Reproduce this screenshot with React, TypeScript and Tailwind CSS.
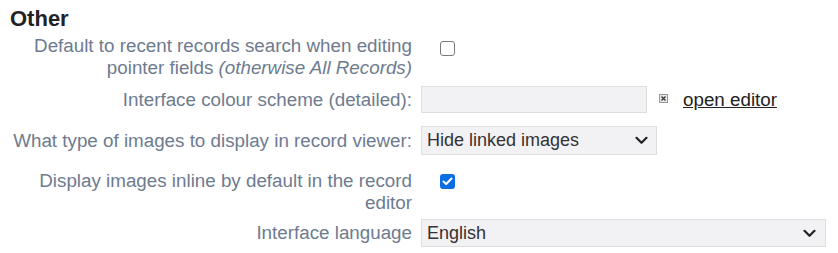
import React from "react";

const Chevron = () => (
  <svg width="13" height="9" viewBox="0 0 13 9" className="block">
    <path d="M1.5 1.8 L6.5 6.8 L11.5 1.8" fill="none" stroke="#222" strokeWidth="2.2" strokeLinecap="round" strokeLinejoin="round" />
  </svg>
);

const Label = ({ children }: { children: React.ReactNode }) => (
  <div className="w-[402px] shrink-0 text-right text-[18.8px] leading-[22px] text-[#6e7b8f]">{children}</div>
);

export default function App() {
  return (
    <div className="w-[838px] h-[253px] bg-white pl-[10px] overflow-hidden" style={{ fontFamily: '"Liberation Sans", Arial, sans-serif' }}>
      <h2 className="pt-[6px] text-[22px] leading-[26px] font-bold text-[#222]">Other</h2>

      <div className="mt-[3px] flex items-start">
        <Label>
          Default to recent records search when editing pointer fields <i>(otherwise All Records)</i>
        </Label>
        <div className="ml-[28px] mt-[6px] w-[15px] h-[15px] rounded-[3px] border border-[#7a7a7a] bg-white" />
      </div>

      <div className="mt-[7px] flex items-center">
        <Label>Interface colour scheme (detailed):</Label>
        <div className="ml-[9px] w-[226px] h-[27px] bg-[#f2f1f4] border border-[#dedde0]" />
        <span className="ml-[12px] mb-[3px] w-[9px] h-[9px] border border-[#999] bg-[#e8e8e8] flex items-center justify-center">
          <svg width="7" height="7" viewBox="0 0 7 7"><path d="M1.5 1.5 L5.5 5.5 M5.5 1.5 L1.5 5.5" stroke="#333" strokeWidth="1.2" /></svg>
        </span>
        <a href="#" className="ml-[15px] text-[18.8px] leading-[22px] text-[#222] underline">open editor</a>
      </div>

      <div className="mt-[13px] flex items-center">
        <Label>What type of images to display in record viewer:</Label>
        <div className="ml-[9px] w-[236px] h-[29px] bg-[#f2f1f4] border border-[#dedde0] flex items-center justify-between pl-[5px] pr-[8px]">
          <span className="text-[18px] text-[#333]">Hide linked images</span>
          <Chevron />
        </div>
      </div>

      <div className="mt-[15px] flex items-start">
        <Label>Display images inline by default in the record editor</Label>
        <div className="ml-[28px] mt-[4px] w-[15px] h-[15px] rounded-[3px] bg-[#0b6ee3] flex items-center justify-center">
          <svg width="11" height="9" viewBox="0 0 11 9"><path d="M1.5 4.5 L4.2 7 L9.5 1.5" fill="none" stroke="#fff" strokeWidth="2" strokeLinecap="round" strokeLinejoin="round" /></svg>
        </div>
      </div>

      <div className="mt-[5px] flex items-center">
        <Label>Interface language</Label>
        <div className="ml-[9px] w-[405px] h-[28px] bg-[#f2f1f4] border border-[#dedde0] flex items-center justify-between pl-[5px] pr-[9px]">
          <span className="text-[18px] text-[#333]">English</span>
          <Chevron />
        </div>
      </div>
    </div>
  );
}
